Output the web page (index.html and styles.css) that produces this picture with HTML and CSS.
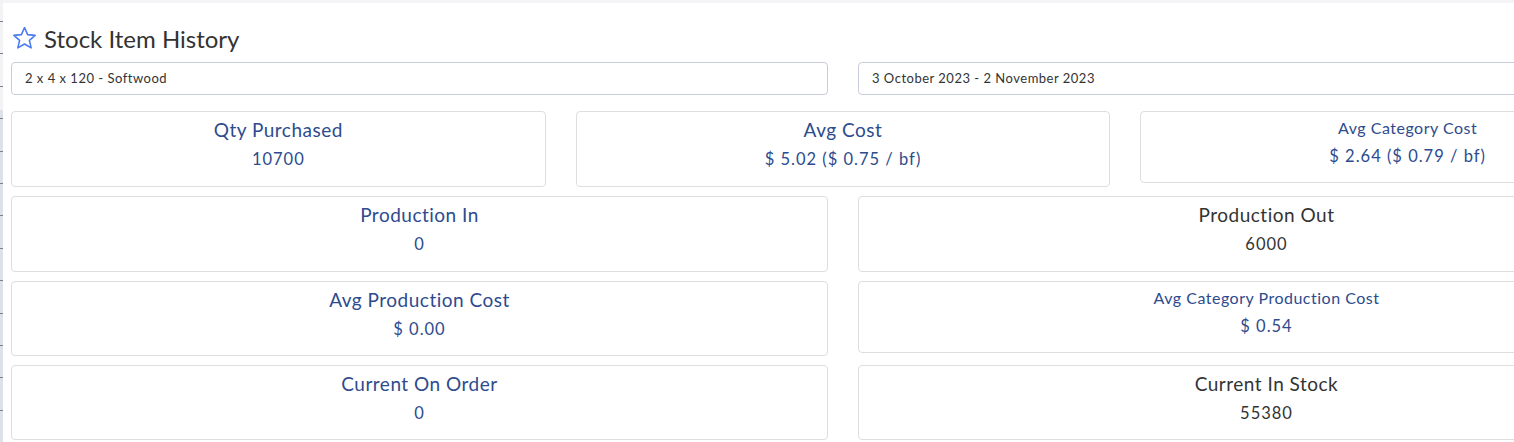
FILE: index.html
```html
<!DOCTYPE html>
<html lang="en">
<head>
	<meta charset="UTF-8">
	<title>Stock Item History</title>
	<link rel="stylesheet" href="styles.css">
</head>
<body>
	<div class="rail"></div>
	<div class="panel">
		<h1 class="title">
			<svg class="star" width="25" height="25" viewBox="0 0 24 24">
				<path d="M12 1.6l3 6.7 7.2.7-5.5 4.8 1.7 7.2L12 17.3 5.6 21l1.7-7.2L1.8 9l7.2-.7z" fill="none" stroke="#4a7bf2" stroke-width="1.5" stroke-linejoin="round"/>
			</svg>
			Stock Item History
		</h1>
		<div class="grid two">
			<div class="field">2 x 4 x 120 - Softwood</div>
			<div class="field">3 October 2023 - 2 November 2023</div>
		</div>
		<div class="grid three first">
			<div class="card">
				<div class="label">Qty Purchased</div>
				<div class="value">10700</div>
			</div>
			<div class="card">
				<div class="label">Avg Cost</div>
				<div class="value">$ 5.02 ($ 0.75 / bf)</div>
			</div>
			<div class="card small">
				<div class="label">Avg Category Cost</div>
				<div class="value">$ 2.64 ($ 0.79 / bf)</div>
			</div>
		</div>
		<div class="grid two">
			<div class="card">
				<div class="label">Production In</div>
				<div class="value">0</div>
			</div>
			<div class="card dark">
				<div class="label">Production Out</div>
				<div class="value">6000</div>
			</div>
		</div>
		<div class="grid two">
			<div class="card">
				<div class="label">Avg Production Cost</div>
				<div class="value">$ 0.00</div>
			</div>
			<div class="card small">
				<div class="label">Avg Category Production Cost</div>
				<div class="value">$ 0.54</div>
			</div>
		</div>
		<div class="grid two">
			<div class="card">
				<div class="label">Current On Order</div>
				<div class="value">0</div>
			</div>
			<div class="card dark">
				<div class="label">Current In Stock</div>
				<div class="value">55380</div>
			</div>
		</div>
	</div>
</body>
</html>
```

FILE: styles.css
```css
*{margin:0; padding:0; box-sizing:border-box;}
html,body{overflow:hidden; height:100%;}
body{background:#f4f4f6; font-family:Lato, "Noto Sans", sans-serif; color:#333; display:flex; padding-top:3px;}
.rail{width:3px; flex:none; margin-top:-3px; background:repeating-linear-gradient(transparent 0, transparent 21px, #7c7f88 21px, #7c7f88 22px, transparent 22px, transparent 32.4px), linear-gradient(#f3f3f5 0, #f3f3f5 110px, #dde1ea 110px);}
.panel{flex:none; width:1690px; background:#fff; padding:0 0 0 8px;}
.title{display:flex; align-items:center; gap:7px; height:59px; padding:12px 0 0 1px; font-size:24px; font-weight:400; color:#333;}
.star{flex:none;}
.grid{display:grid; width:1664px; gap:30px; align-items:start; margin-bottom:9px;}
.two{grid-template-columns:1fr 1fr;}
.three{grid-template-columns:1fr 1fr 1fr;}
.first{margin-top:16px;}
.field{height:33px; border:1px solid #c9ccd9; border-radius:4px; padding:0 13px; font-size:13px; line-height:31px; color:#333; letter-spacing:.5px;}
.card{border:1px solid #dedede; border-radius:4px; text-align:center; padding:4px 10px 13.33px; color:#2d4b8e;}
.first .card{padding-bottom:14.33px;}
.first .card.small{padding-bottom:13.33px;}
.card .label{font-size:19px; line-height:27px; letter-spacing:.5px;}
.card .value{font-size:16.5px; line-height:26px; margin-top:3px; letter-spacing:1px;}
.card.small .label{font-size:16px; line-height:24px;}
.card.dark{color:#333;}
```
